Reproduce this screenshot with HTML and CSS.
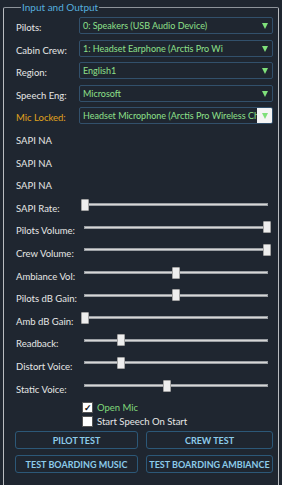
FILE: index.html
```html
<!DOCTYPE html>
<html lang="en">
<head>
    <meta charset="UTF-8">
    <title>Input and Output</title>
    <link rel="stylesheet" href="styles.css">
</head>
<body>
    <fieldset class="group">
        <legend>Input and Output</legend>

        <div class="form">
            <label class="lbl">Pilots:</label>
            <div class="combo"><span>0: Speakers (USB Audio Device)</span><i class="arrow"></i></div>

            <label class="lbl">Cabin Crew:</label>
            <div class="combo"><span>1: Headset Earphone (Arctis Pro Wi</span><i class="arrow"></i></div>

            <label class="lbl">Region:</label>
            <div class="combo"><span>English1</span><i class="arrow"></i></div>

            <label class="lbl">Speech Eng:</label>
            <div class="combo"><span>Microsoft</span><i class="arrow"></i></div>

            <label class="lbl locked">Mic Locked:</label>
            <div class="combo open"><span>Headset Microphone (Arctis Pro Wireless Ch</span><i class="arrow"></i></div>

            <label class="lbl">SAPI NA</label>
            <div></div>
            <label class="lbl">SAPI NA</label>
            <div></div>
            <label class="lbl">SAPI NA</label>
            <div></div>

            <label class="lbl">SAPI Rate:</label>
            <input class="slider" type="range" min="0" max="100" value="0">

            <label class="lbl">Pilots Volume:</label>
            <input class="slider" type="range" min="0" max="100" value="100">

            <label class="lbl">Crew Volume:</label>
            <input class="slider" type="range" min="0" max="100" value="100">

            <label class="lbl">Ambiance Vol:</label>
            <input class="slider" type="range" min="0" max="100" value="50">

            <label class="lbl">Pilots dB Gain:</label>
            <input class="slider" type="range" min="0" max="100" value="50">

            <label class="lbl">Amb dB Gain:</label>
            <input class="slider" type="range" min="0" max="100" value="0">

            <label class="lbl">Readback:</label>
            <input class="slider" type="range" min="0" max="100" value="20">

            <label class="lbl">Distort Voice:</label>
            <input class="slider" type="range" min="0" max="100" value="20">

            <label class="lbl">Static Voice:</label>
            <input class="slider" type="range" min="0" max="100" value="45">
        </div>

        <div class="checks">
            <label class="check on"><span class="box">&#10003;</span>Open Mic</label>
            <label class="check"><span class="box"></span>Start Speech On Start</label>
        </div>

        <div class="buttons">
            <button class="btn">PILOT TEST</button>
            <button class="btn">CREW TEST</button>
            <button class="btn">TEST BOARDING MUSIC</button>
            <button class="btn">TEST BOARDING AMBIANCE</button>
        </div>
    </fieldset>
</body>
</html>
```

FILE: styles.css
```css
html, body {
    overflow: hidden;
}

body {
    margin: 0;
    padding: 0 0 0 3px;
    width: 276px;
    height: 485px;
    background-color: #1f2630;
    color: #e6e6e6;
    font-family: Lato, "Open Sans", sans-serif;
    font-size: 9.5px;
}

.group {
    margin: 0;
    padding: 2px 5px 0 12px;
    height: 490px;
    box-sizing: border-box;
    border: 1px solid #b9bcc0;
    border-top-color: #8d939a;
    border-radius: 2px;
}

.group legend {
    margin-left: 5px;
    padding: 0 1px;
    line-height: 14px;
    color: #55aedf;
    font-size: 10px;
}

.form {
    display: grid;
    grid-template-columns: 63px 194px;
    grid-auto-rows: 22.6px;
}

.lbl {
    padding-top: 6px;
    line-height: 12px;
    white-space: nowrap;
}

.lbl.locked {
    color: #e0a21c;
}

.combo {
    position: relative;
    margin-top: 1px;
    height: 17px;
    box-sizing: border-box;
    border: 1px solid #32506b;
    border-radius: 2px;
    padding: 0 0 0 3px;
    line-height: 15px;
    font-size: 9px;
    color: #8ee08a;
    white-space: nowrap;
    overflow: hidden;
}

.combo .arrow {
    position: absolute;
    right: 0;
    top: 0;
    width: 15px;
    height: 15px;
}

.combo .arrow::after {
    content: "";
    position: absolute;
    left: 5px;
    top: 5px;
    border-left: 3.5px solid transparent;
    border-right: 3.5px solid transparent;
    border-top: 6px solid #7fe07a;
}

.combo.open .arrow {
    background-color: #f4f4f4;
}

.slider {
    -webkit-appearance: none;
    appearance: none;
    margin: 2px 2px 0;
    width: 190px;
    height: 12px;
    background: transparent;
}

.slider::-webkit-slider-runnable-track {
    height: 12px;
    background:
        linear-gradient(#d6d6d6, #d6d6d6) no-repeat center / calc(100% - 8px) 1px,
        linear-gradient(#9a9ea3, #9a9ea3) no-repeat center / calc(100% - 6px) 3px;
}

.slider::-webkit-slider-thumb {
    -webkit-appearance: none;
    width: 8px;
    height: 12px;
    box-sizing: border-box;
    background: #eeeeee;
    border: 1px solid #a3a3a3;
    border-radius: 1px;
}

.checks {
    padding-left: 66px;
}

.check {
    display: flex;
    align-items: center;
    height: 14px;
    white-space: nowrap;
}

.check.on {
    color: #7fd87a;
}

.check .box {
    width: 11px;
    height: 11px;
    box-sizing: border-box;
    margin-right: 4px;
    background: #ffffff;
    border: 1px solid #555555;
    color: #111111;
    font-size: 9px;
    line-height: 9px;
    text-align: center;
    font-weight: bold;
}

.buttons {
    display: grid;
    grid-template-columns: 123px 127px;
    gap: 6px 8px;
    margin: 3px 0 0 -1px;
}

.btn {
    height: 18px;
    padding: 0;
    background: transparent;
    border: 1px solid #2c5878;
    border-radius: 3px;
    color: #8ccbea;
    font-family: Lato, "Open Sans", sans-serif;
    font-size: 9px;
    font-weight: bold;
    white-space: nowrap;
}
```
